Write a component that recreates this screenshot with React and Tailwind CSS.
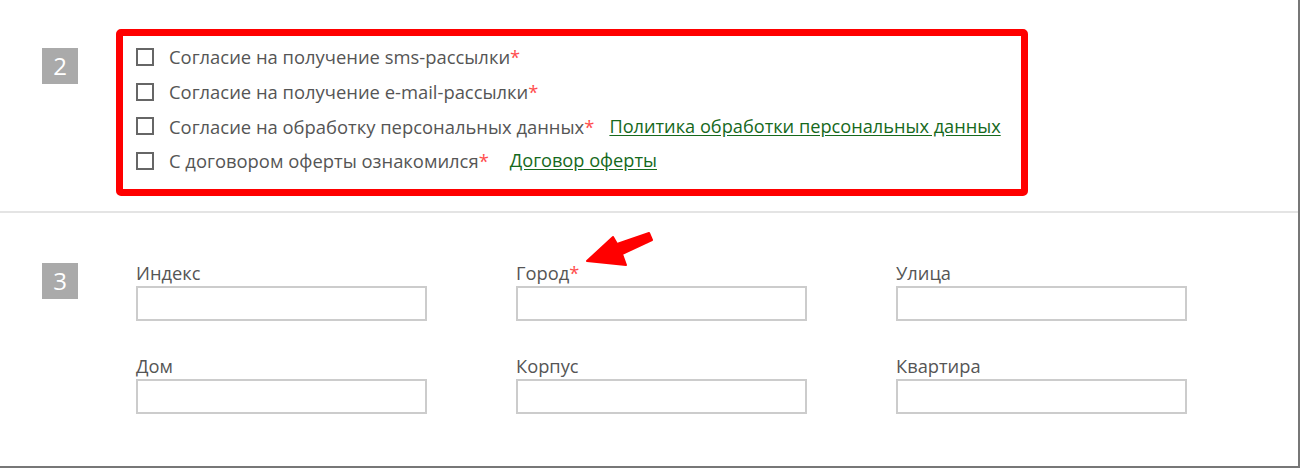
import React from 'react';

const consents = [
  { label: 'Согласие на получение sms-рассылки' },
  { label: 'Согласие на получение e-mail-рассылки' },
  { label: 'Согласие на обработку персональных данных', link: 'Политика обработки персональных данных', gap: 'ml-[15px]' },
  { label: 'С договором оферты ознакомился', link: 'Договор оферты', gap: 'ml-[21px]' },
];

const fields = [
  { label: 'Индекс' },
  { label: 'Город', required: true },
  { label: 'Улица' },
  { label: 'Дом' },
  { label: 'Корпус' },
  { label: 'Квартира' },
];

function StepBadge({ n }) {
  return (
    <div className="w-[36px] h-[36px] bg-[#aaaaaa] text-white text-[24px] leading-none flex items-center justify-center shrink-0">
      {n}
    </div>
  );
}

function Arrow() {
  return (
    <svg className="absolute left-[580px] top-[230px]" width="80" height="42" viewBox="0 0 80 42">
      <path
        d="M7 31 L33 7 L37 14 L69 3 L72 10 L42 24 L46 35 Z"
        fill="#ff0000"
        stroke="#ff0000"
        strokeWidth="2"
        strokeLinejoin="round"
      />
    </svg>
  );
}

export default function App() {
  return (
    <div
      className="relative w-[1300px] h-[468px] bg-white border-r-2 border-b-2 border-[#777] text-[#555] overflow-hidden"
      style={{ fontFamily: "'Open Sans', 'Noto Sans', sans-serif" }}
    >
      {/* step 2: consents */}
      <section className="h-[211px] pt-[29px] pl-[42px] flex items-start">
        <div className="mt-[19px]">
          <StepBadge n="2" />
        </div>
        <div className="ml-[38px] w-[912px] h-[167px] border-[7px] border-[#ff0000] rounded-[5px] pl-[13px] pt-[4px]">
          {consents.map((c) => (
            <label key={c.label} className="h-[34.6px] flex items-center text-[18.4px] cursor-pointer">
              <span className="w-[18px] h-[18px] border-2 border-[#666] bg-white shrink-0" />
              <span className="ml-[15px]">
                {c.label}
                <span className="text-[#ff4d4d]">*</span>
              </span>
              {c.link && (
                <a href="#" className={`${c.gap} text-[18.2px] text-[#16691c] underline underline-offset-2`}>
                  {c.link}
                </a>
              )}
            </label>
          ))}
        </div>
      </section>

      <div className="h-[2px] bg-[#e4e4e4]" />

      {/* step 3: address */}
      <section className="pt-[50px] pl-[42px] flex items-start">
        <StepBadge n="3" />
        <div className="ml-[58px] -mt-[3px] grid grid-cols-[291px_291px_291px] gap-x-[89px] gap-y-[32px]">
          {fields.map((f) => (
            <div key={f.label} className="flex flex-col">
              <span className="text-[18.3px] leading-[25px]">
                {f.label}
                {f.required && <span className="text-[#ff4d4d]">*</span>}
              </span>
              <input className="mt-[1px] w-[291px] h-[35px] border-2 border-[#cccccc] bg-white outline-none" />
            </div>
          ))}
        </div>
      </section>

      <Arrow />
    </div>
  );
}
